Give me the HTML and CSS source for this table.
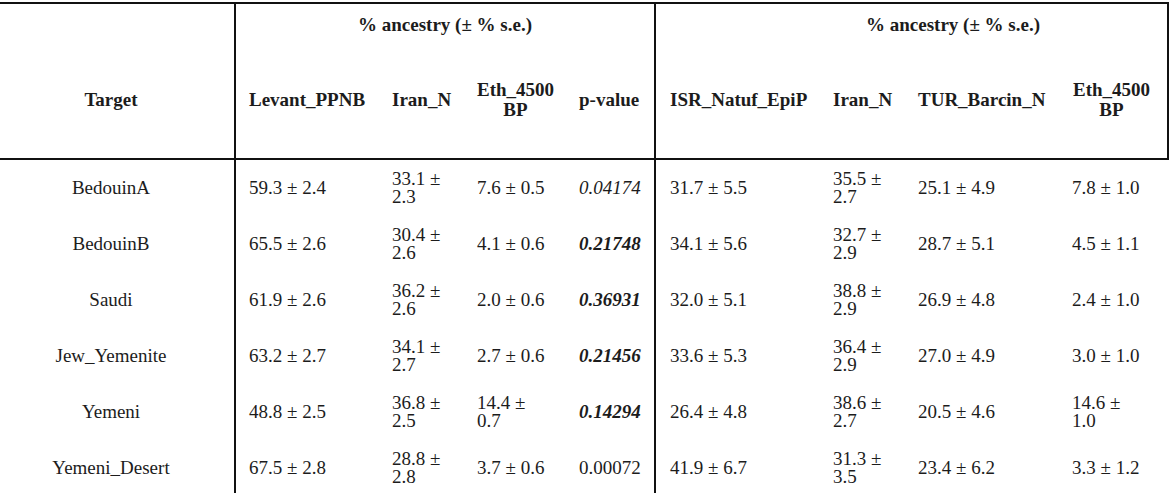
FILE: index.html
```html
<!DOCTYPE html>
<html lang="en">
<head>
<meta charset="utf-8">
<title>Ancestry table</title>
<link rel="stylesheet" href="styles.css">
</head>
<body>
<table class="anc">
  <colgroup>
    <col class="c-target">
    <col class="c-lev">
    <col class="c-iran">
    <col class="c-eth">
    <col class="c-p">
    <col class="c-isr">
    <col class="c-iran2">
    <col class="c-tur">
    <col class="c-eth2">
  </colgroup>
  <thead>
    <tr class="h-group">
      <th class="first"></th>
      <th class="grp sep" colspan="4">% ancestry (± % s.e.)</th>
      <th class="grp grp-r sep last" colspan="4">% ancestry (± % s.e.)</th>
    </tr>
    <tr class="h-cols">
      <th class="first">Target</th>
      <th class="sep">Levant_PPNB</th>
      <th>Iran_N</th>
      <th class="eth">Eth_4500<br>BP</th>
      <th>p-value</th>
      <th class="sep isr">ISR_Natuf_EpiP</th>
      <th>Iran_N</th>
      <th>TUR_Barcin_N</th>
      <th class="eth2 last">Eth_4500<br>BP</th>
    </tr>
  </thead>
  <tbody>
    <tr>
      <td class="first">BedouinA</td>
      <td class="num sep">59.3 ± 2.4</td>
      <td class="num">33.1 ±<br>2.3</td>
      <td class="num">7.6 ± 0.5</td>
      <td class="pv it">0.04174</td>
      <td class="num sep isr">31.7 ± 5.5</td>
      <td class="num">35.5 ±<br>2.7</td>
      <td class="num">25.1 ± 4.9</td>
      <td class="num">7.8 ± 1.0</td>
    </tr>
    <tr>
      <td class="first">BedouinB</td>
      <td class="num sep">65.5 ± 2.6</td>
      <td class="num">30.4 ±<br>2.6</td>
      <td class="num">4.1 ± 0.6</td>
      <td class="pv bi">0.21748</td>
      <td class="num sep isr">34.1 ± 5.6</td>
      <td class="num">32.7 ±<br>2.9</td>
      <td class="num">28.7 ± 5.1</td>
      <td class="num">4.5 ± 1.1</td>
    </tr>
    <tr>
      <td class="first">Saudi</td>
      <td class="num sep">61.9 ± 2.6</td>
      <td class="num">36.2 ±<br>2.6</td>
      <td class="num">2.0 ± 0.6</td>
      <td class="pv bi">0.36931</td>
      <td class="num sep isr">32.0 ± 5.1</td>
      <td class="num">38.8 ±<br>2.9</td>
      <td class="num">26.9 ± 4.8</td>
      <td class="num">2.4 ± 1.0</td>
    </tr>
    <tr>
      <td class="first">Jew_Yemenite</td>
      <td class="num sep">63.2 ± 2.7</td>
      <td class="num">34.1 ±<br>2.7</td>
      <td class="num">2.7 ± 0.6</td>
      <td class="pv bi">0.21456</td>
      <td class="num sep isr">33.6 ± 5.3</td>
      <td class="num">36.4 ±<br>2.9</td>
      <td class="num">27.0 ± 4.9</td>
      <td class="num">3.0 ± 1.0</td>
    </tr>
    <tr>
      <td class="first">Yemeni</td>
      <td class="num sep">48.8 ± 2.5</td>
      <td class="num">36.8 ±<br>2.5</td>
      <td class="num">14.4 ±<br>0.7</td>
      <td class="pv bi">0.14294</td>
      <td class="num sep isr">26.4 ± 4.8</td>
      <td class="num">38.6 ±<br>2.7</td>
      <td class="num">20.5 ± 4.6</td>
      <td class="num">14.6 ±<br>1.0</td>
    </tr>
    <tr>
      <td class="first">Yemeni_Desert</td>
      <td class="num sep">67.5 ± 2.8</td>
      <td class="num">28.8 ±<br>2.8</td>
      <td class="num">3.7 ± 0.6</td>
      <td class="pv">0.00072</td>
      <td class="num sep isr">41.9 ± 6.7</td>
      <td class="num">31.3 ±<br>3.5</td>
      <td class="num">23.4 ± 6.2</td>
      <td class="num">3.3 ± 1.2</td>
    </tr>
  </tbody>
</table>
</body>
</html>
```
FILE: styles.css
```css
html, body {
  margin: 0;
  padding: 0;
  background: #ffffff;
}

body {
  font-family: "Liberation Serif", "Times New Roman", serif;
  font-size: 19px;
  color: #1c1c1c;
  overflow: hidden;
}

.anc {
  margin-top: 2px;
  width: 1169px;
  table-layout: fixed;
  border-collapse: separate;
  border-spacing: 0;
}

.c-target { width: 234px; }
.c-lev { width: 158px; }
.c-iran { width: 85px; }
.c-eth { width: 102px; }
.c-p { width: 75px; }
.c-isr { width: 179px; }
.c-iran2 { width: 85px; }
.c-tur { width: 154px; }
.c-eth2 { width: 97px; }

th, td {
  padding: 0;
  text-align: left;
  white-space: nowrap;
  vertical-align: middle;
}

th {
  font-weight: bold;
}

.sep {
  border-left: 2px solid #111;
  padding-left: 13px;
}

.sep.isr {
  padding-left: 14px;
}

.h-group th {
  border-top: 2px solid #111;
  height: 22px;
  line-height: 22px;
  padding-top: 10px;
  padding-bottom: 10px;
}

.h-group th.grp {
  text-align: center;
  padding-left: 0;
}

.h-group th.grp-r {
  padding-left: 83px;
}

.h-cols th {
  border-bottom: 2px solid #111;
  height: 107px;
  line-height: 20px;
  padding-bottom: 5px;
}

th.last {
  border-right: 2px solid #111;
}

.first {
  text-align: center;
  padding-right: 12px;
}

.h-cols th.eth {
  text-align: center;
  padding-right: 25px;
}

.h-cols th.eth2 {
  text-align: center;
  padding-right: 16px;
}

tbody td {
  height: 56px;
  line-height: 18px;
}

td.it {
  font-style: italic;
}

td.bi {
  font-style: italic;
  font-weight: bold;
}
```
